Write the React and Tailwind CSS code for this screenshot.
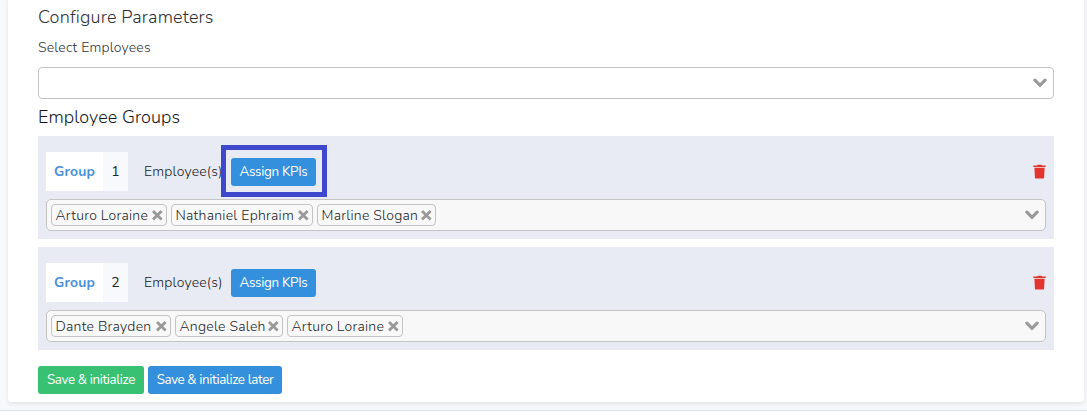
import React from "react";

function Chevron() {
  return (
    <svg width="14" height="10" viewBox="0 0 14 10" fill="none" stroke="#999" strokeWidth="3.2" strokeLinecap="round">
      <path d="M1.9 2.1 7 7.3l5.1-5.2" strokeLinejoin="miter" />
    </svg>
  );
}

function Trash() {
  return (
    <svg width="13" height="15" viewBox="0 0 13 15" fill="#e3342f">
      <path d="M.3 1.6h3.8l.6-.8h3.8l.6.8h3.6v1.3H.3zM1.4 3.8h10.2l-.5 9.6a1.3 1.3 0 0 1-1.3 1.2H3.2a1.3 1.3 0 0 1-1.3-1.2z" />
    </svg>
  );
}

function Tag({ name, width }) {
  return (
    <span className={`flex h-[22px] shrink-0 items-center justify-between rounded-[4px] border border-[#c4c4c4] pr-[3px] pl-[3.5px] text-sm whitespace-nowrap ${width}`}>
      <span className="pt-px font-[350] tracking-[0.25px] text-[#222529]">{name}</span>
      <svg className="shrink-0" width="11" height="11" viewBox="0 0 11 11" stroke="#999" strokeWidth="2.8">
        <path d="m1 1 8.6 8.6M9.6 1 1 9.6" />
      </svg>
    </span>
  );
}

const groups = [
  {
    number: 1,
    highlighted: true,
    members: [
      { name: "Arturo Loraine", width: "w-[116px]" },
      { name: "Nathaniel Ephraim", width: "w-[142px]" },
      { name: "Marline Slogan", width: "w-[119px]" },
    ],
  },
  {
    number: 2,
    members: [
      { name: "Dante Brayden", width: "w-[120px]" },
      { name: "Angele Saleh", width: "w-[108px]" },
      { name: "Arturo Loraine", width: "w-[116px]" },
    ],
  },
];

function Group({ group }) {
  return (
    <section className="h-[103px] bg-[#e8ebf3] px-2 pt-4">
      <div className="flex h-[39px] items-center text-sm">
        <div className="flex h-[39px] w-[57px] items-center justify-center bg-white font-bold tracking-[0.2px] text-[#4a90d9]">Group</div>
        <div className="flex h-[39px] w-[25px] items-center justify-center bg-[#f8f9fd] text-[#212529]">{group.number}</div>
        <span className="ml-4 w-[87px] font-[350] tracking-[0.2px] whitespace-nowrap text-[#15191d]">Employee(s)</span>
        <div className="relative">
          <button className="flex h-7 w-[85px] items-center justify-center rounded-[3px] bg-[#3490dc] text-[13.4px] tracking-[-0.32px] whitespace-nowrap text-white">Assign KPIs</button>
          {group.highlighted && <div className="absolute -top-[13px] -left-[10px] h-[52px] w-[106px] border-[5px] border-[#3f48cc]" />}
        </div>
        <button className="ml-auto" aria-label="Delete group"><Trash /></button>
      </div>
      <div className="mt-2 flex h-8 items-center gap-1 rounded-[5px] border border-[#c4c4c4] bg-[#f8f8f8] pr-[6px] pl-1">
        {group.members.map((m) => <Tag key={m.name} {...m} />)}
        <span className="ml-auto"><Chevron /></span>
      </div>
    </section>
  );
}

export default function App() {
  return (
    <div className="h-[416px] overflow-hidden bg-white font-['Nunito',Lato,sans-serif]">
      <div className="flow-root h-[411px] border-b border-[#dae1e7] bg-[#f8f9fd] pr-[3px] pl-2">
        <main className="-mt-1 h-[406px] rounded-[4px] bg-white px-[30px] pt-[10px] shadow-[0_2px_5px_rgba(0,0,0,0.09)]">
          <h1 className="h-[22px] text-lg leading-[22px] font-[350] tracking-[0.18px] text-[#2e3237]">Configure Parameters</h1>
          <label className="mt-[11px] block h-[18px] text-sm leading-[18px] font-[350] tracking-[0.19px] text-[#2e3237]">Select Employees</label>
          <div className="mt-[10px] flex h-8 items-center justify-end rounded-[4px] border border-[#c4c4c4] pr-[6px]"><Chevron /></div>
          <h2 className="mt-[7px] h-[22px] text-lg leading-[22px] font-[350] tracking-[0.07px] text-[#15191d]">Employee Groups</h2>
          <div className="mt-2 flex flex-col gap-2">
            {groups.map((g) => <Group key={g.number} group={g} />)}
          </div>
          <div className="mt-4 flex gap-1 text-[13.4px] whitespace-nowrap text-white">
            <button className="h-7 w-[106px] rounded-[3px] bg-[#38c172] tracking-[-0.38px]">Save &amp; initialize</button>
            <button className="h-7 w-[134px] rounded-[3px] bg-[#3490dc] tracking-[-0.38px]">Save &amp; initialize later</button>
          </div>
        </main>
      </div>
    </div>
  );
}
